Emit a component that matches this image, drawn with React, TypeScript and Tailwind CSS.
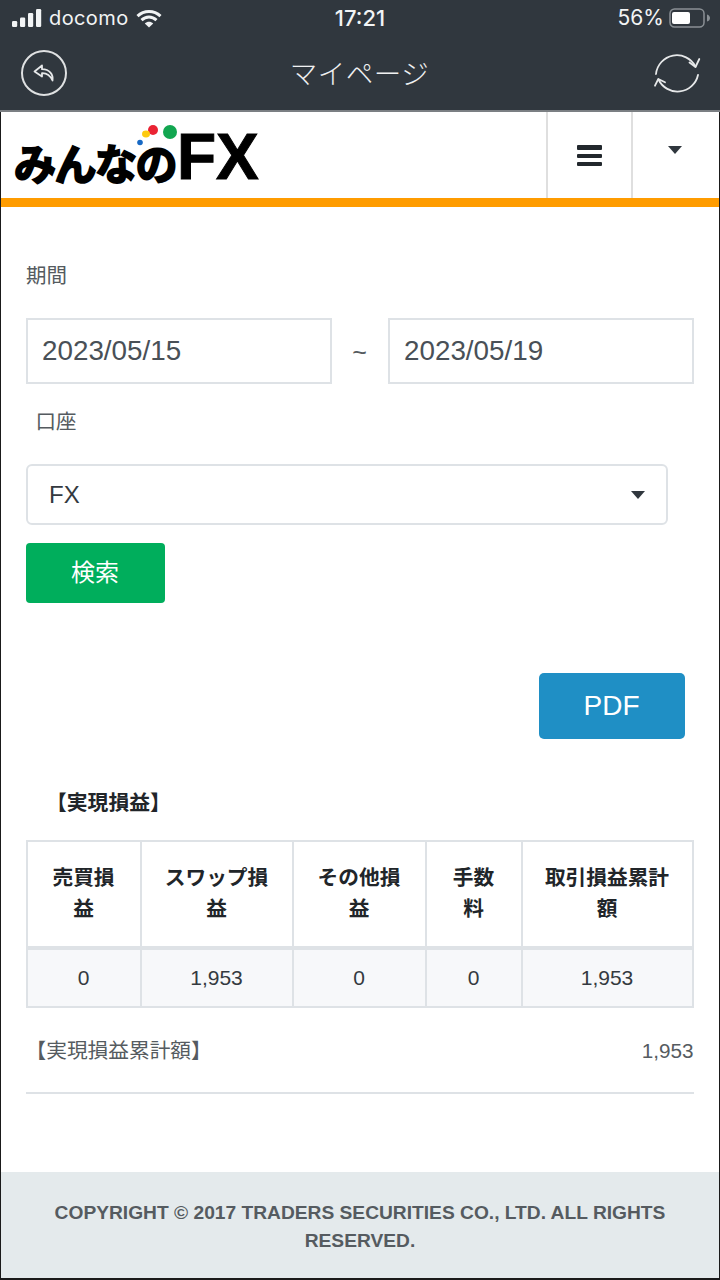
import React from "react";

const sans = "font-['Liberation_Sans','Noto_Sans_CJK_JP',sans-serif]";

function Signal() {
  return (
    <svg width="30" height="18" viewBox="0 0 30 18" fill="#f2f4f5">
      <rect x="0" y="12" width="5.2" height="6" rx="1.2" />
      <rect x="8" y="8.5" width="5.2" height="9.5" rx="1.2" />
      <rect x="16" y="4" width="5.2" height="14" rx="1.2" />
      <rect x="24" y="0" width="5.2" height="18" rx="1.2" />
    </svg>
  );
}

function Wifi() {
  return (
    <svg width="26" height="19" viewBox="0 0 26 19" fill="none" stroke="#f2f4f5" strokeWidth="3">
      <path d="M1.5 7.2C8 1 18 1 24.5 7.2" />
      <path d="M5.5 11.2C10 7 16 7 20.5 11.2" />
      <path d="M13 18.5L8.8 14.4C11.3 12.3 14.7 12.3 17.2 14.4Z" fill="#f2f4f5" stroke="none" />
    </svg>
  );
}

function Battery() {
  return (
    <svg width="42" height="20" viewBox="0 0 42 20" fill="none">
      <rect x="1" y="1" width="34" height="18" rx="4.5" stroke="#8a9095" strokeWidth="1.5" />
      <rect x="3" y="4" width="18" height="12" rx="2" fill="#fff" />
      <path d="M38 6.5C40 7 41 8.5 41 10C41 11.5 40 13 38 13.5Z" fill="#8a9095" />
    </svg>
  );
}

function BackIcon() {
  return (
    <div className="w-[46px] h-[46px] rounded-full border-2 border-[#dfe1e2] flex items-center justify-center">
      <svg width="22" height="18" viewBox="0 0 22 18" fill="none" stroke="#e6e8e9" strokeWidth="1.8" strokeLinejoin="round" strokeLinecap="round">
        <path d="M9 1.5L1.5 7.5L9 12.5V9.2C14 9 17 11 19.5 16.5C20.5 10 16.5 5.5 9 5.2Z" />
      </svg>
    </div>
  );
}

function RefreshIcon() {
  return (
    <svg className="-mt-[2px]" width="50" height="50" viewBox="0 0 50 50" fill="none" stroke="#e6e8e9" strokeWidth="1.8" strokeLinecap="round" strokeLinejoin="round">
      <path d="M4 27A21 21 0 0 1 43.5 19.5" />
      <path d="M47.3 12L43.5 20L37.5 15.5" />
      <path d="M46 28A21 21 0 0 1 6.5 32.5" />
      <path d="M3 38.7L6.3 32L13 35.3" />
    </svg>
  );
}

function Logo() {
  return (
    <div className="relative w-[250px] h-[70px]">
      <span className="absolute left-0 top-[17px] text-[42px] leading-[46px] font-bold text-black tracking-[-1.5px] font-['Noto_Sans_CJK_JP',sans-serif] whitespace-nowrap [-webkit-text-stroke:2px_black]">
        みんなの
      </span>
      <span className="absolute left-[163px] top-[0px] text-[64px] leading-[70px] font-bold text-black font-['Liberation_Sans',sans-serif] [-webkit-text-stroke:1px_black]">
        FX
      </span>
      <svg className="absolute left-0 top-0" width="180" height="40" viewBox="0 0 180 40">
        <circle cx="139" cy="8" r="5" fill="#ea2333" />
        <ellipse cx="132" cy="12" rx="4" ry="3.4" fill="#fdca10" />
        <circle cx="156" cy="10" r="7" fill="#12a650" />
        <circle cx="126" cy="20.5" r="2.8" fill="#1769c4" />
      </svg>
    </div>
  );
}

const cols = ["w-[114px]", "w-[152px]", "w-[133px]", "w-[96px]", "w-[171px]"];
const heads = [
  <>売買損<br />益</>,
  <>スワップ損<br />益</>,
  <>その他損<br />益</>,
  <>手数<br />料</>,
  <>取引損益累計<br />額</>,
];
const vals = ["0", "1,953", "0", "0", "1,953"];

export default function App() {
  return (
    <div className={`w-[720px] h-[1280px] overflow-hidden bg-white flex flex-col ${sans}`}>
      <div className="h-[112px] bg-[#30373e] border-b-2 border-[#7b7f83] flex flex-col shrink-0">
        <div className="h-[36px] relative flex items-center justify-between pl-[12px] pr-[9px] text-[#f2f4f5] text-[21px]">
          <div className="flex items-center gap-[7px]">
            <Signal />
            <span className="font-['Inter',sans-serif] text-[20px] tracking-[0.4px] font-normal">docomo</span>
            <Wifi />
          </div>
          <span className="absolute left-0 right-0 text-center font-['Inter',sans-serif] text-[22px] font-medium pointer-events-none">17:21</span>
          <div className="flex items-center gap-[5px]">
            <span className="font-['Inter',sans-serif]">56%</span>
            <Battery />
          </div>
        </div>
        <div className="flex-1 flex items-center justify-between pl-[21px] pr-[18px]">
          <BackIcon />
          <span className="text-[27.5px] text-[#f0f1f2] font-['Noto_Sans_CJK_JP',sans-serif] font-light tracking-[0.5px]">マイページ</span>
          <RefreshIcon />
        </div>
      </div>

      <div className="flex-1 flex flex-col border-l-[1.5px] border-r-[1.5px] border-b-[2px] border-[#1a1a1a] min-h-0">
        <div className="h-[86px] flex shrink-0">
          <div className="flex-1 pl-[13px] pt-[10px]"><Logo /></div>
          <div className="w-[85px] border-l-2 border-[#dfdfdf] flex flex-col items-center justify-center gap-[4px] pt-[1px]">
            <div className="w-[25px] h-[5px] rounded-[1px] bg-[#22282d]" />
            <div className="w-[25px] h-[4px] rounded-[1px] bg-[#22282d]" />
            <div className="w-[25px] h-[4px] rounded-[1px] bg-[#22282d]" />
          </div>
          <div className="w-[88px] border-l-2 border-[#dfdfdf] flex justify-center pt-[34px] pr-[2px]">
            <div className="w-0 h-0 border-x-[7px] border-x-transparent border-t-[8px] border-t-[#30373e]" />
          </div>
        </div>
        <div className="h-[9px] bg-[#ff9c00] shrink-0" />

        <div className="flex-1 flex flex-col pl-[24.5px] pr-[24.5px]">
          <div className="mt-[56px] pl-[0.5px] text-[20.5px] leading-[26px] text-[#555b60]">期間</div>
          <div className="mt-[29px] flex items-center">
            <div className="w-[306px] h-[66px] border-2 border-[#dee2e6] flex items-center pl-[14.5px] text-[27.8px] text-[#495057]">2023/05/15</div>
            <div className="w-[56px] text-center text-[25px] pt-[3px] text-[#555b60]">~</div>
            <div className="w-[306px] h-[66px] border-2 border-[#dee2e6] flex items-center pl-[14.5px] text-[27.8px] text-[#495057]">2023/05/19</div>
          </div>
          <div className="mt-[25px] pl-[10px] text-[20.5px] leading-[26px] text-[#555b60]">口座</div>
          <div className="mt-[29px] w-[642px] h-[61px] border-2 border-[#dee2e6] rounded-[6px] flex items-center justify-between pl-[21.5px] pr-[21px] text-[24px] text-[#343a40]">
            <span>FX</span>
            <div className="w-0 h-0 border-x-[7px] border-x-transparent border-t-[8px] border-t-[#30373e]" />
          </div>
          <div className="mt-[18px] w-[139px] h-[60px] rounded-[4px] bg-[#00ae5c] flex items-center justify-center text-white text-[24px]">検索</div>
          <div className="mt-[70px] flex justify-end pr-[10px]">
            <div className="w-[146px] h-[66px] rounded-[5px] bg-[#1f8fc5] flex items-center justify-center text-white text-[28px]">PDF</div>
          </div>
          <div className="mt-[50px] pl-[20.5px] text-[20.8px] leading-[28px] font-bold text-[#212529]">【実現損益】</div>
          <table className="mt-[23px] w-[667px] table-fixed border-collapse text-[#212529]">
            <colgroup>
              {cols.map((c, i) => <col key={i} className={c} />)}
            </colgroup>
            <thead>
              <tr>
                {heads.map((h, i) => (
                  <th key={i} className="h-[107px] border-2 border-b-[4px] border-[#dee2e6] text-[20.7px] leading-[31px] font-bold text-center pb-[2px]">{h}</th>
                ))}
              </tr>
            </thead>
            <tbody>
              <tr className="bg-[#f7f8fa]">
                {vals.map((v, i) => (
                  <td key={i} className="h-[59px] border-2 border-[#dee2e6] text-[21px] text-center text-[#343a40]">{v}</td>
                ))}
              </tr>
            </tbody>
          </table>
          <div className="mt-[28px] mr-[1px] pb-[26px] border-b-2 border-[#dee2e6] flex justify-between items-center text-[20.7px] leading-[30px] text-[#555b60]">
            <span>【実現損益累計額】</span>
            <span>1,953</span>
          </div>
        </div>

        <div className="h-[106px] pt-[4px] bg-[#e4eaec] shrink-0 flex items-center justify-center text-center px-[20px] text-[19.2px] leading-[28px] font-bold text-[#555b60]">
          COPYRIGHT © 2017 TRADERS SECURITIES CO., LTD. ALL RIGHTS RESERVED.
        </div>
      </div>
    </div>
  );
}
